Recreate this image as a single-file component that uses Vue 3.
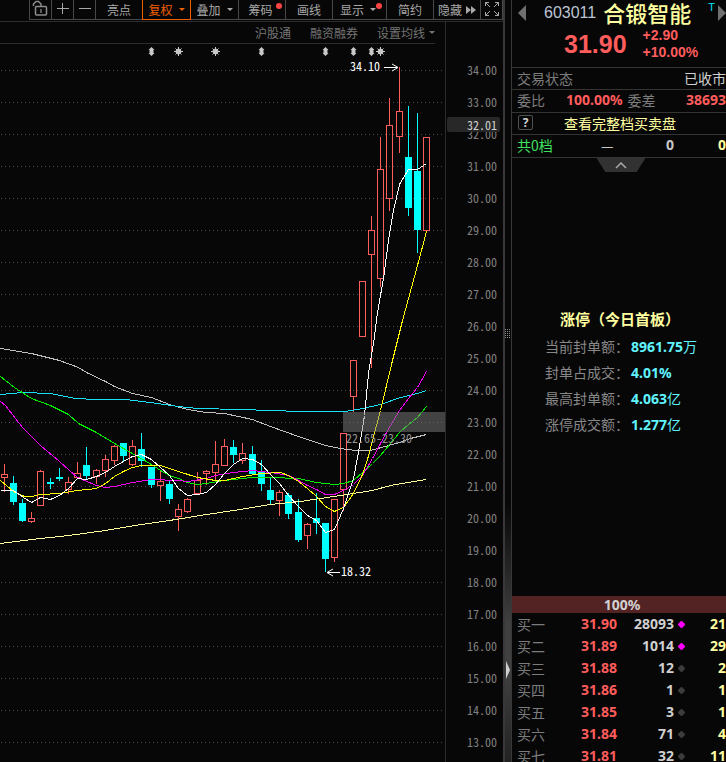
<script setup>
const topPrice = 34
const levels = Array.from({ length: 22 }, (_, i) => topPrice - i)
const levelY = (p) => 48 + (topPrice - p) * 32

// centre x, body top, body bottom, wick top, wick bottom, rising
const candles = [
  [4, 474, 477, 464, 491, 1], [13, 483, 501, 476, 504, 0], [22, 503, 520, 499, 521, 0],
  [31, 518, 521, 512, 522, 1], [40, 471, 505, 470, 505, 1], [50, 482, 483, 478, 488, 0],
  [59, 477, 478, 468, 480, 0], [68, 482, 489, 477, 493, 1], [77, 473, 477, 462, 478, 1],
  [86, 465, 475, 447, 478, 0], [96, 470, 476, 469, 483, 1], [105, 459, 470, 455, 476, 1],
  [114, 446, 460, 445, 464, 1], [123, 443, 455, 443, 460, 0], [132, 446, 464, 440, 465, 1],
  [141, 449, 460, 433, 466, 0], [151, 467, 484, 467, 487, 0], [160, 481, 485, 471, 500, 1],
  [169, 484, 498, 481, 503, 0], [178, 509, 516, 504, 530, 1], [187, 499, 511, 498, 512, 1],
  [197, 480, 493, 472, 494, 1], [206, 471, 473, 470, 484, 1], [215, 464, 472, 441, 480, 1],
  [224, 446, 465, 439, 465, 1], [233, 447, 454, 440, 462, 0], [242, 453, 460, 443, 463, 1],
  [252, 454, 473, 446, 474, 0], [261, 471, 483, 460, 490, 0], [270, 490, 499, 478, 503, 0],
  [279, 492, 500, 490, 515, 1], [288, 495, 513, 493, 518, 0], [298, 512, 539, 499, 541, 0],
  [307, 524, 535, 523, 548, 1], [316, 518, 522, 493, 533, 0], [325, 523, 558, 523, 571, 0],
  [334, 499, 557, 499, 561, 1], [343, 433, 489, 433, 510, 1], [353, 360, 396, 360, 411, 1],
  [362, 281, 336, 281, 336, 1], [371, 230, 254, 216, 367, 1], [380, 169, 278, 137, 286, 1],
  [389, 125, 198, 98, 210, 1], [399, 111, 136, 67, 152, 1], [408, 157, 207, 106, 215, 0],
  [417, 171, 229, 113, 252, 0], [426, 137, 230, 137, 230, 1],
].map(([x, top, bottom, high, low, up]) => ({ x, top: top - 22, bottom: bottom - 22, high: high - 22, low: low - 22, up }))

const averages = [
  { color: '#ffff9a', pts: '0,543 31,539 68,535 105,530 141,524 169,520 206,514 233,510 270,504 300,501 340,495 372,490 390,485 426,479' },
  { color: '#c0c0c0', pts: '0,348 31,353 59,360 78,367 86,372 105,381 114,386 132,393 151,397 169,404 187,409 206,412 224,413 252,419 270,426 298,436 325,445 340,448 355,450 370,450 399,442 410,438 426,434' },
  { color: '#1ae0f5', pts: '0,394 22,392 50,393 75,398 95,399 125,399 150,402 178,406 197,408 240,409 300,411 345,411 362,408 380,404 400,397 417,393 426,390' },
  { color: '#00f000', pts: '0,376 14,387 31,398 50,405 68,414 78,423 96,432 114,443 132,453 151,464 160,470 169,475 178,478 187,482 197,484 206,483 224,480 251,477 270,477 298,478 316,482 334,484 343,483 353,480 362,472 372,463 380,455 390,443 399,432 408,424 417,417 426,406' },
  { color: '#f000f0', pts: '0,401 5,405 22,427 40,445 59,461 77,477 96,485 105,487 114,486 132,482 151,479 178,480 187,481 206,478 215,475 233,472 252,470 270,472 288,475 298,480 307,485 316,489 325,494 334,494 343,490 353,484 362,475 372,458 380,443 390,425 399,410 408,398 417,387 426,371' },
  { color: '#ffff00', pts: '0,480 13,491 24,496 31,496 40,494 59,493 77,490 96,488 105,483 114,476 123,471 132,467 141,465 160,465 169,468 178,471 197,477 215,480 224,480 233,478 242,476 261,473 280,472 288,475 298,481 307,488 316,496 325,506 334,511 343,507 353,493 362,474 367,459 380,410 392,360 402,320 417,265 426,231' },
  { color: '#ffffff', pts: '0,490 13,490 23,497 31,502 40,497 50,499 59,495 68,488 77,478 86,479 96,476 105,472 114,466 123,461 132,456 141,454 151,459 160,467 169,475 178,488 187,495 197,494 206,492 215,484 224,473 233,464 242,458 252,459 261,464 270,474 279,483 288,495 298,506 307,515 316,520 325,532 334,529 343,508 353,478 358,452 364,415 368,373 373,343 377,312 383,278 388,240 390,228 393,210 399,184 408,169 417,169 426,163' },
]

const arrows = [151, 261, 325, 353, 371]
const stars = [178, 215, 380]

const stats = [
  ['当前封单额：', '8961.75', '万'],
  ['封单占成交：', '4.01%', ''],
  ['最高封单额：', '4.063', '亿'],
  ['涨停成交额：', '1.277', '亿'],
]

const bids = [
  ['买一', '31.90', '28093', true, '21'],
  ['买二', '31.89', '1014', true, '29'],
  ['买三', '31.88', '12', false, '2'],
  ['买四', '31.86', '1', false, '1'],
  ['买五', '31.85', '3', false, '1'],
  ['买六', '31.84', '71', false, '4'],
  ['买七', '31.81', '32', false, '11'],
]
</script>

<template>
  <div class="terminal">
    <main class="left">
      <nav class="toolbar">
        <button class="tool icon" aria-label="锁定">
          <svg width="17" height="17" viewBox="0 0 17 17" fill="none" stroke="#8c8c8c">
            <path d="M1.500 6V4L4 1.500H6.500L9 4V6" stroke-width="1.500" />
            <rect x="3.500" y="6.500" width="11" height="8.500" rx="1" stroke-width="1.500" />
            <path d="M9 9V13" stroke="#b0b0b0" />
          </svg>
        </button>
        <button class="tool icon" aria-label="放大">
          <svg width="12" height="12" viewBox="0 0 12 12" stroke="#a8a8a8" shape-rendering="crispEdges"><path d="M0 5.500H12M5.500 0V11" /></svg>
        </button>
        <button class="tool icon" aria-label="缩小">
          <svg width="12" height="12" viewBox="0 0 12 12" stroke="#a8a8a8" shape-rendering="crispEdges"><path d="M0 5.500H12" /></svg>
        </button>
        <button class="tool">亮点</button>
        <button class="tool active">复权<i class="caret"></i></button>
        <button class="tool">叠加<i class="caret"></i></button>
        <button class="tool dotted">筹码<i class="dot"></i></button>
        <button class="tool">画线</button>
        <button class="tool wide">显示<i class="caret"></i><i class="dot"></i></button>
        <button class="tool">简约</button>
        <button class="tool tight">隐藏<svg width="10" height="8" viewBox="0 0 10 8" fill="#a8a8a8"><path d="M0 0L5 4L0 8ZM5 0L10 4L5 8Z" /></svg></button>
        <button class="tool icon last" aria-label="全屏">
          <svg width="14" height="14" viewBox="0 0 14 14" fill="none" stroke="#a8a8a8"><path d="M.5 4V.5H4M.5.5L5 5M10 .5H13.500V4M13.500.5L9 5M.5 10V13.500H4M.5 13.500L5 9M13.500 10V13.500H10M13.500 13.500L9 9" /></svg>
        </button>
      </nav>
      <section class="board">
        <div class="plot">
          <div class="tags">
            <a href="#">沪股通</a>
            <a href="#">融资融券</a>
            <button class="ma">设置均线<i class="caret"></i></button>
          </div>
          <svg class="chart" width="445" height="740" viewBox="0 0 445 740">
            <g stroke="#4a4a4a" stroke-dasharray="1 3" shape-rendering="crispEdges">
              <line v-for="p in levels" :key="p" x1="1" x2="445" :y1="levelY(p) + 0.5" :y2="levelY(p) + 0.5" />
            </g>
            <g fill="#c8c8c8">
              <path v-for="x in arrows" :key="x" :transform="`translate(${x} 25)`" d="M.5 0L3.500 3H2.500V6H3.500L.5 9L-2.500 6H-1.500V3H-2.500Z" />
            </g>
            <g stroke="#c8c8c8">
              <g v-for="x in stars" :key="x" :transform="`translate(${x + 0.5} 29.500)`">
                <circle r="2.500" fill="#c8c8c8" />
                <path d="M0-4.500V4.500M-4.500 0H4.500M-3-3L3 3M3-3L-3 3" />
              </g>
            </g>
            <g v-for="c in candles" :key="c.x" shape-rendering="crispEdges">
              <template v-if="c.up">
                <path :d="`M${c.x + 0.5} ${c.high}V${c.top}M${c.x + 0.5} ${c.bottom}V${c.low + 1}`" stroke="#ff5c5c" />
                <rect :x="c.x - 2.5" :y="c.top + 0.5" width="6" :height="c.bottom - c.top" fill="none" stroke="#ff5c5c" />
              </template>
              <template v-else>
                <path :d="`M${c.x + 0.5} ${c.high}V${c.low + 1}`" stroke="#00ffff" />
                <rect :x="c.x - 3" :y="c.top" width="7" :height="c.bottom - c.top + 1" fill="#00ffff" />
              </template>
            </g>
            <g transform="translate(0.5 -21.500)" fill="none" shape-rendering="crispEdges">
              <polyline v-for="a in averages" :key="a.color" :points="a.pts" :stroke="a.color" />
            </g>
            <rect x="343" y="390" width="102" height="20" fill="#808080" fill-opacity=".5" />
            <text class="num" x="346" y="421" fill="#909090">22.65-23.30</text>
            <text class="num" x="350" y="49" fill="#ffffff">34.10</text>
            <path d="M384 45.500H397M392 42L398 45.500L392 49" fill="none" stroke="#ffffff" />
            <text class="num" x="341" y="554" fill="#ffffff">18.32</text>
            <path d="M340 550.500H327M333 547L327 550.500L333 554" fill="none" stroke="#ffffff" />
          </svg>
        </div>
        <aside class="axis">
          <span v-for="p in levels" :key="p" class="num">{{ p }}.00</span>
          <strong class="num cursor">32.01</strong>
        </aside>
      </section>
    </main>

    <div class="splitter">
      <svg class="grip" width="6" height="9" viewBox="0 0 6 9" stroke="#8a8a8a" stroke-dasharray="1 1" shape-rendering="crispEdges"><path d="M.5 0V9M2.500 0V9M4.500 0V9" /></svg>
      <button class="expand" aria-label="展开"></button>
    </div>

    <aside class="quote">
      <header class="head">
        <div class="stock">
          <button class="prev" aria-label="上一只"></button>
          <span class="code">603011</span>
          <h1>合锻智能</h1>
          <sup>T</sup>
          <button class="next" aria-label="下一只"></button>
        </div>
        <div class="price">
          <strong>31.90</strong>
          <p><span>+2.90</span><span>+10.00%</span></p>
        </div>
      </header>
      <div class="row"><span class="dim">交易状态</span><span class="status">已收市</span></div>
      <div class="row mid"><span class="dim">委比</span><b class="ratio">100.00%</b><span class="dim">委差</span><b class="diff">38693</b></div>
      <div class="row"><button class="help">?</button><a class="full" href="#">查看完整档买卖盘</a></div>
      <div class="row depth"><span class="green">共0档</span><span class="dash">—</span><b>0</b><b class="pale">0</b></div>
      <button class="fold" aria-label="收起">
        <svg width="12" height="7" viewBox="0 0 12 7" fill="none" stroke="#a8a8a8" stroke-width="1.500"><path d="M1 6L6 1L11 6" /></svg>
      </button>

      <section class="limit">
        <h2>涨停（今日首板）</h2>
        <p v-for="s in stats" :key="s[0]"><span>{{ s[0] }}</span><b>{{ s[1] }}</b><em>{{ s[2] }}</em></p>
      </section>

      <section class="book">
        <div class="bar">100%</div>
        <table>
          <tbody>
            <tr v-for="b in bids" :key="b[0]">
              <th scope="row">{{ b[0] }}</th>
              <td class="bid">{{ b[1] }}</td>
              <td class="vol">{{ b[2] }}</td>
              <td class="mark"><svg width="7" height="7" viewBox="0 0 7 7"><path d="M3 0H4L7 3V4L4 7H3L0 4V3Z" :fill="b[3] ? '#ff00ff' : '#3c3c3c'" /></svg></td>
              <td class="cnt">{{ b[4] }}</td>
            </tr>
          </tbody>
        </table>
      </section>
    </aside>
  </div>
</template>

<style>
body { background: #070707; overflow: hidden; }
</style>

<style scoped>
.terminal {
  display: grid;
  grid-template-columns: minmax(0, 1fr) 9px 214px;
  height: 100vh;
  overflow: hidden;
  background: #070707;
  color: #a8a8a8;
  font: 12px/20px "Noto Sans CJK SC", sans-serif;
}
.terminal * { box-sizing: border-box; }
button {
  padding: 0;
  border: 0;
  background: none;
  color: inherit;
  font: inherit;
}
a { color: inherit; text-decoration: none; }
.num {
  font: 12px/12px "Noto Sans CJK SC", sans-serif;
  font-feature-settings: "hwid";
}
.left {
  display: flex;
  flex-direction: column;
  min-width: 0;
  overflow: hidden;
}
.toolbar {
  display: flex;
  justify-content: flex-end;
  height: 22px;
  flex: none;
  border-bottom: 1px solid #2c2c2c;
}
.tool {
  display: flex;
  align-items: center;
  justify-content: center;
  gap: 6px;
  width: 47px;
  height: 20px;
  border: solid #484848;
  border-width: 0 0 1px 1px;
  line-height: 18px;
}
.tool.icon { width: 22px; padding-bottom: 2px; }
.tool.last { width: 23px; border-right-width: 1px; }
.tool.active {
  width: 49px;
  border: 1px solid #f06000;
  border-top: 0;
  color: #f06000;
}
.tool.active + .tool { border-left: 0; }
.tool.wide { width: 54px; padding-left: 3px; }
.tool.wide .dot { margin-left: -6px; }
.tool.dotted { gap: 3px; padding-left: 6px; }
.tool.tight { gap: 4px; }
.caret {
  border: solid transparent;
  border-width: 3px 3px 0;
  border-top-color: currentColor;
}
.dot {
  width: 6px;
  height: 6px;
  margin-bottom: 8px;
  border-radius: 50%;
  background: #ff4444;
}
.board { display: flex; flex: 1; min-height: 0; }
.plot {
  position: relative;
  flex: 1;
  min-width: 0;
  border-right: 1px solid #2c2c2c;
}
.tags {
  position: absolute;
  top: 0;
  left: 0;
  right: 10px;
  display: flex;
  justify-content: flex-end;
  gap: 19px;
  height: 22px;
  border-bottom: 1px solid #2c2c2c;
  color: #747474;
  line-height: 22px;
}
.ma { display: flex; align-items: center; gap: 4px; line-height: 22px; }
.chart { display: block; }
.axis {
  position: relative;
  display: flex;
  flex-direction: column;
  gap: 20px;
  width: 57px;
  padding: 42px 6px 0 0;
  color: #808080;
  text-align: right;
}
.axis .num { flex: none; }
.axis .cursor {
  position: absolute;
  top: 95px;
  left: 1px;
  right: 3px;
  padding: 2px 3px 1px 0;
  border-radius: 2px;
  background: #282828;
  color: #d0d0d0;
}
.splitter {
  position: relative;
  border: solid #383838;
  border-width: 0 1px 0 2px;
  background: linear-gradient(#070707 66%, #404040 82%, #404040 88%, #222222);
}
.grip { position: absolute; top: 329px; left: 0; }
.expand {
  position: absolute;
  top: 661px;
  left: 1px;
  border: solid transparent;
  border-width: 9px 0 9px 4px;
  border-left-color: #d0d0d0;
}
.quote {
  display: flex;
  flex-direction: column;
  min-width: 0;
  overflow: hidden;
  font-size: 14px;
}
.quote > * { flex: none; }
.quote b, .bar, td { font-family: "Noto Sans", sans-serif; font-weight: 700; }
.head { height: 67px; }
.stock {
  display: flex;
  align-items: center;
  height: 25px;
  padding-left: 6px;
}
.prev, .next {
  flex: none;
  border: solid transparent;
  border-width: 8px 8px 8px 0;
  border-right-color: #707070;
}
.next { border-width: 8px 0 8px 8px; border-left-color: #707070; margin-left: auto; }
.code {
  margin: 0 7px 0 18px;
  color: #bcc4d4;
  font: 16px/25px "Liberation Sans", sans-serif;
}
h1 {
  margin: 0;
  color: #ffffa0;
  font-size: 22px;
  font-weight: 500;
  line-height: 25px;
  white-space: nowrap;
}
sup {
  align-self: flex-start;
  margin-left: 17px;
  color: #00d8e8;
  font: 11px/16px "DejaVu Sans Mono", monospace;
}
.price {
  display: flex;
  align-items: center;
  gap: 16px;
  height: 38px;
  padding-left: 52px;
  color: #ff5c5c;
  font-family: "Liberation Sans", sans-serif;
  font-weight: 700;
}
.price strong { font-size: 25px; }
.price p {
  display: flex;
  flex-direction: column;
  margin: 0;
  line-height: 17px;
}
.row {
  display: flex;
  align-items: center;
  height: 22px;
  padding: 0 0 2px 5px;
  border-top: 1px solid #343434;
  line-height: 18px;
  white-space: nowrap;
}
.row.mid { height: 23px; }
.row.depth {
  height: 24px;
  border-bottom: 1px solid #343434;
  color: #c8c8c8;
}
.dim { color: #7c7c7c; }
.status { margin-left: auto; color: #d0d0d0; }
.ratio { margin: 0 5px 0 21px; color: #ff5c5c; }
.diff { margin-left: auto; color: #ff5c5c; }
.help {
  width: 15px;
  height: 15px;
  margin: 0 31px 0 1px;
  border: 1px solid #505050;
  border-radius: 2px;
  color: #d0d0d0;
  font: 700 12px/12px "Noto Sans", sans-serif;
}
.full { color: #ffffa0; }
.green { color: #40e060; width: 84px; }
.dash { width: 65px; }
.pale { margin-left: auto; color: #ffffa0; }
.fold {
  display: flex;
  justify-content: center;
  align-items: center;
  align-self: center;
  width: 49px;
  height: 14px;
  margin-left: 4px;
  background: #323232;
  clip-path: polygon(0 0, 100% 0, 82% 100%, 18% 100%);
}
.limit { margin-top: 134px; padding-left: 33px; color: #888888; }
h2 {
  margin: 0 0 2px 15px;
  color: #ffffa0;
  font-size: 15px;
  font-weight: 700;
  line-height: 26px;
}
.limit p { height: 26px; margin: 0; line-height: 24px; }
.limit b { margin-left: 2px; }
.limit b, .limit em { color: #60f4ff; font-style: normal; }
.book { margin-top: 158px; }
.bar {
  height: 17px;
  padding-left: 6px;
  background: #532222;
  color: #d0d0d0;
  line-height: 17px;
  text-align: center;
}
table { width: 100%; table-layout: fixed; border-collapse: collapse; }
th, td { height: 22px; padding: 0; line-height: 22px; text-align: right; }
th { width: 45px; padding-left: 5px; color: #7c7c7c; font-weight: 400; text-align: left; }
.bid { width: 60px; color: #ff5c5c; }
.vol { width: 57px; color: #d0d0d0; }
.mark { width: 14px; text-align: center; }
.mark svg { vertical-align: 1px; }
.cnt { color: #ffffa0; }
</style>
